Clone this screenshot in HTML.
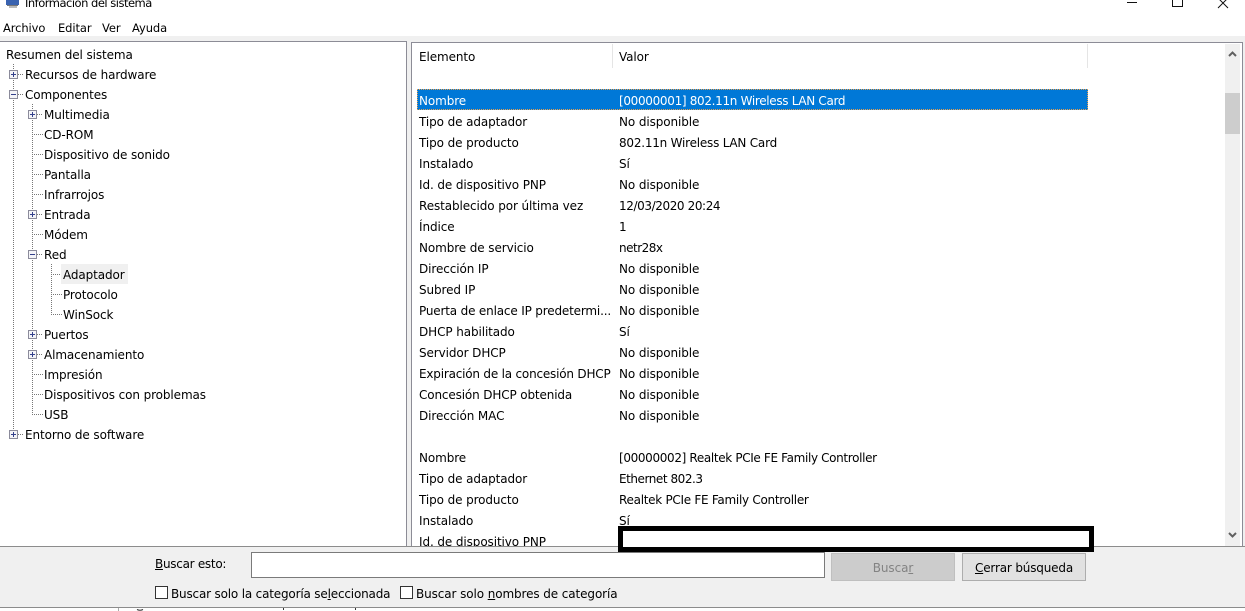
<!DOCTYPE html>
<html><head><meta charset="utf-8"><style>
html,body{margin:0;padding:0;width:1245px;height:611px;overflow:hidden;background:#fff}
body{position:relative;font-family:"DejaVu Sans","Liberation Sans",sans-serif;font-size:12px;color:#000}
.a{position:absolute}
.t{position:absolute;line-height:20px;height:20px;white-space:nowrap;letter-spacing:-.1px}
u{text-underline-offset:1px}
</style></head><body>
<svg class="a" style="left:5px;top:0" width="16" height="10" viewBox="0 0 16 10"><rect x="1" y="0" width="13" height="5" fill="#3a63b0"/><path d="M2 5.500H13" stroke="#777"/><rect x="4" y="6" width="8" height="2" fill="#bbb"/></svg>
<div class="t" style="left:25px;top:-7px;font-size:11.5px;letter-spacing:-.5px">Información del sistema</div>
<svg class="a" style="left:1120px;top:0" width="125" height="10"><path d="M7 2.500H17M52.500 0V6.500H62.500V0" fill="none" stroke="#111" stroke-width="1"/><path d="M98 -2L108 8M108 -2L98 8" fill="none" stroke="#111" stroke-width="1"/></svg>
<div class="t" style="left:3px;top:18px;font-size:11.500px">Archivo</div>
<div class="t" style="left:58px;top:18px;font-size:11.500px">Editar</div>
<div class="t" style="left:102px;top:18px;font-size:11.500px">Ver</div>
<div class="t" style="left:132px;top:18px;font-size:11.500px">Ayuda</div>

<div class="a" style="left:0;top:36px;width:1245px;height:6px;background:#f0f0f0"></div>
<div class="a" style="left:0;top:41px;width:407px;height:505px;box-sizing:border-box;border-top:1px solid #8c8c96;border-right:1px solid #8c8c96;background:#fff"></div>
<div class="a" style="left:407px;top:42px;width:4px;height:504px;background:#f0f0f0"></div>
<div class="a" style="left:411px;top:42px;width:832px;height:504px;box-sizing:border-box;border:1px solid #8c8c96;border-bottom:0;background:#fff"></div>
<div class="a" style="left:1243px;top:42px;width:2px;height:504px;background:#f0f0f0"></div>

<svg class="a" style="left:0;top:0" width="120" height="450" shape-rendering="crispEdges">
<g stroke="#777" stroke-width="1" stroke-dasharray="1 1" fill="none">
<path d="M13.500 64V434M32.500 104V414M51.500 264V314"/>
<path d="M18 74.500H24M18 94.500H24M18 434.500H24"/>
<path d="M37 114.500H43M32 134.500H43M32 154.500H43M32 174.500H43M32 194.500H43M37 214.500H43M32 234.500H43M37 254.500H43M37 334.500H43M37 354.500H43M32 374.500H43M32 394.500H43M32 414.500H43"/>
<path d="M51 274.500H62M51 294.500H62M51 314.500H62"/>
</g>
<g fill="#f4f4f8" stroke="#8b8b9b">
<rect x="9.500" y="70.500" width="8" height="8"/><rect x="9.500" y="90.500" width="8" height="8"/><rect x="9.500" y="430.500" width="8" height="8"/>
<rect x="28.500" y="110.500" width="8" height="8"/><rect x="28.500" y="210.500" width="8" height="8"/><rect x="28.500" y="250.500" width="8" height="8"/><rect x="28.500" y="330.500" width="8" height="8"/><rect x="28.500" y="350.500" width="8" height="8"/>
</g>
<path d="M11 74.500H16M13.500 72V77M11 94.500H16M11 434.500H16M13.500 432V437M30 114.500H35M32.500 112V117M30 214.500H35M32.500 212V217M30 254.500H35M30 334.500H35M32.500 332V337M30 354.500H35M32.500 352V357" stroke="#33408c" fill="none"/>
</svg>

<div class="a" style="left:61px;top:264px;width:67px;height:20px;background:#f0f0f0"></div>
<div class="t" style="left:6px;top:45px">Resumen del sistema</div>
<div class="t" style="left:25px;top:65px">Recursos de hardware</div>
<div class="t" style="left:25px;top:85px">Componentes</div>
<div class="t" style="left:44px;top:105px">Multimedia</div>
<div class="t" style="left:44px;top:125px">CD-ROM</div>
<div class="t" style="left:44px;top:145px">Dispositivo de sonido</div>
<div class="t" style="left:44px;top:165px">Pantalla</div>
<div class="t" style="left:44px;top:185px">Infrarrojos</div>
<div class="t" style="left:44px;top:205px">Entrada</div>
<div class="t" style="left:44px;top:225px">Módem</div>
<div class="t" style="left:44px;top:245px">Red</div>
<div class="t" style="left:63px;top:265px">Adaptador</div>
<div class="t" style="left:63px;top:285px">Protocolo</div>
<div class="t" style="left:63px;top:305px">WinSock</div>
<div class="t" style="left:44px;top:325px">Puertos</div>
<div class="t" style="left:44px;top:345px">Almacenamiento</div>
<div class="t" style="left:44px;top:365px">Impresión</div>
<div class="t" style="left:44px;top:385px">Dispositivos con problemas</div>
<div class="t" style="left:44px;top:405px">USB</div>
<div class="t" style="left:25px;top:425px">Entorno de software</div>

<div class="a" style="left:612px;top:44px;width:1px;height:24px;background:#e5e5e5"></div>
<div class="a" style="left:1087px;top:44px;width:1px;height:24px;background:#e5e5e5"></div>
<div class="t" style="left:419px;top:47px">Elemento</div>
<div class="t" style="left:619px;top:47px">Valor</div>

<div class="a" style="left:417px;top:89px;width:671px;height:21px;box-sizing:border-box;background:#0078d7;border:1px dotted #e8a050"></div>
<div class="t" style="left:419px;top:91px;color:#fff">Nombre</div><div class="t" style="left:619px;top:91px;color:#fff;letter-spacing:-.32px">[00000001] 802.11n Wireless LAN Card</div>
<div class="t" style="left:419px;top:112px">Tipo de adaptador</div><div class="t" style="left:619px;top:112px">No disponible</div>
<div class="t" style="left:419px;top:133px">Tipo de producto</div><div class="t" style="left:619px;top:133px;letter-spacing:-.22px">802.11n Wireless LAN Card</div>
<div class="t" style="left:419px;top:154px">Instalado</div><div class="t" style="left:619px;top:154px">Sí</div>
<div class="t" style="left:419px;top:175px">Id. de dispositivo PNP</div><div class="t" style="left:619px;top:175px">No disponible</div>
<div class="t" style="left:419px;top:196px">Restablecido por última vez</div><div class="t" style="left:619px;top:196px;letter-spacing:-.4px">12/03/2020 20:24</div>
<div class="t" style="left:419px;top:217px">Índice</div><div class="t" style="left:619px;top:217px">1</div>
<div class="t" style="left:419px;top:238px">Nombre de servicio</div><div class="t" style="left:619px;top:238px;letter-spacing:-.5px">netr28x</div>
<div class="t" style="left:419px;top:259px">Dirección IP</div><div class="t" style="left:619px;top:259px">No disponible</div>
<div class="t" style="left:419px;top:280px">Subred IP</div><div class="t" style="left:619px;top:280px">No disponible</div>
<div class="t" style="left:419px;top:301px;letter-spacing:-.17px">Puerta de enlace IP predetermi...</div><div class="t" style="left:619px;top:301px">No disponible</div>
<div class="t" style="left:419px;top:322px">DHCP habilitado</div><div class="t" style="left:619px;top:322px">Sí</div>
<div class="t" style="left:419px;top:343px">Servidor DHCP</div><div class="t" style="left:619px;top:343px">No disponible</div>
<div class="t" style="left:419px;top:364px;letter-spacing:-.2px">Expiración de la concesión DHCP</div><div class="t" style="left:619px;top:364px">No disponible</div>
<div class="t" style="left:419px;top:385px;letter-spacing:-.14px">Concesión DHCP obtenida</div><div class="t" style="left:619px;top:385px">No disponible</div>
<div class="t" style="left:419px;top:406px">Dirección MAC</div><div class="t" style="left:619px;top:406px">No disponible</div>
<div class="t" style="left:419px;top:448px">Nombre</div><div class="t" style="left:619px;top:448px;letter-spacing:-.35px">[00000002] Realtek PCIe FE Family Controller</div>
<div class="t" style="left:419px;top:469px">Tipo de adaptador</div><div class="t" style="left:619px;top:469px;letter-spacing:-.45px">Ethernet 802.3</div>
<div class="t" style="left:419px;top:490px">Tipo de producto</div><div class="t" style="left:619px;top:490px;letter-spacing:-.28px">Realtek PCIe FE Family Controller</div>
<div class="t" style="left:419px;top:511px">Instalado</div><div class="t" style="left:619px;top:511px">Sí</div>
<div class="t" style="left:419px;top:532px;height:14px;overflow:hidden">Id. de dispositivo PNP</div>

<div class="a" style="left:1225px;top:44px;width:15px;height:502px;background:#f0f0f0"></div>
<div class="a" style="left:1225px;top:93px;width:15px;height:41px;background:#cdcdcd"></div>
<svg class="a" style="left:1225px;top:44px" width="15" height="502"><path d="M4 12L7.500 8.500L11 12M4 489L7.500 492.500L11 489" fill="none" stroke="#606060" stroke-width="2"/></svg>

<div class="a" style="left:0;top:546px;width:1245px;height:62px;box-sizing:border-box;background:#f0f0f0;border-top:1px solid #8c8c8c;border-bottom:1px solid #8c8c8c"></div>
<svg class="a" style="left:0;top:608px" width="1245" height="3"><path d="M118.500 0V3" stroke="#aaa"/><path d="M137 1.500Q140 3 143 1.500M283.500 0V2M355.500 0V2" stroke="#333" fill="none"/></svg>
<div class="a" style="left:618px;top:526px;width:476px;height:26px;box-sizing:border-box;border:5px solid #000;background:#fff"></div>
<div class="t" style="left:155px;top:554px;letter-spacing:-.28px"><u>B</u>uscar esto:</div>
<div class="a" style="left:251px;top:552px;width:574px;height:26px;box-sizing:border-box;border:1px solid #7a7a7a;background:#fff"></div>
<div class="a" style="left:831px;top:553px;width:124px;height:28px;box-sizing:border-box;border:1px solid #bfbfbf;background:#ccc;color:#838383;text-align:center;line-height:29px;letter-spacing:-.1px">Busca<u>r</u></div>
<div class="a" style="left:962px;top:553px;width:124px;height:28px;box-sizing:border-box;border:1px solid #adadad;background:#e1e1e1;text-align:center;line-height:29px;letter-spacing:-.17px"><u>C</u>errar búsqueda</div>
<div class="a" style="left:155px;top:586px;width:13px;height:13px;box-sizing:border-box;border:1px solid #333;background:#fff"></div>
<div class="t" style="left:171px;top:584px;letter-spacing:-.18px">Buscar solo la categoría se<u>l</u>eccionada</div>
<div class="a" style="left:400px;top:586px;width:13px;height:13px;box-sizing:border-box;border:1px solid #333;background:#fff"></div>
<div class="t" style="left:416px;top:584px">Buscar solo <u>n</u>ombres de categoría</div>
</body></html>
